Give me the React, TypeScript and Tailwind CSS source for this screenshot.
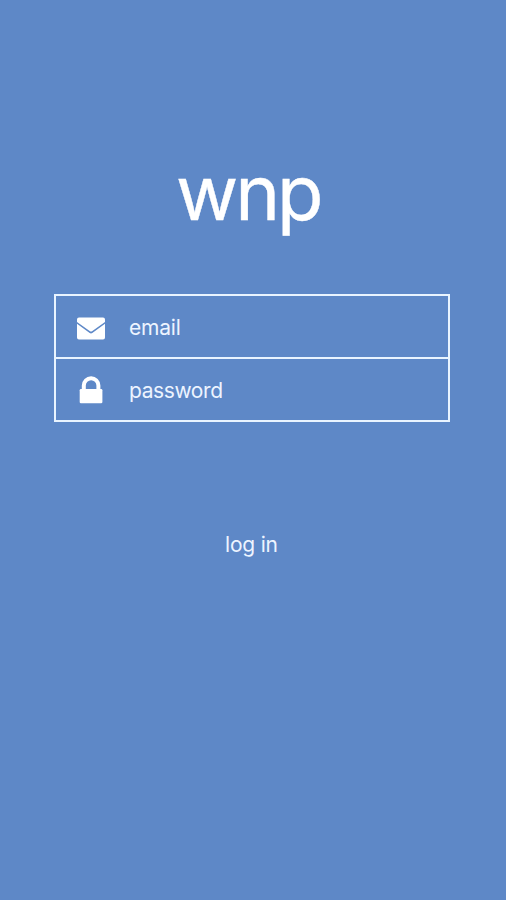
import React from "react";

function Envelope() {
  return (
    <svg className="mt-0.5 size-7 shrink-0" viewBox="0 0 28 28" fill="currentColor" aria-hidden="true">
      <path d="M2 3.5h24A2 2 0 0 1 28 5.5V8L15 17.2a1.8 1.8 0 0 1-2 0L0 8V5.5A2 2 0 0 1 2 3.5Z" />
      <path d="M0 9.8 12.7 18.9a2.2 2.2 0 0 0 2.6 0L28 9.8V23.5a2 2 0 0 1-2 2H2a2 2 0 0 1-2-2Z" />
    </svg>
  );
}

function Lock() {
  return (
    <svg className="size-7 shrink-0" viewBox="0 0 28 28" fill="none" aria-hidden="true">
      <path d="M6.8 15V9.5a7.3 7.3 0 0 1 14.6 0V15" stroke="currentColor" strokeWidth="4" />
      <rect x="2.7" y="13" width="22.7" height="14.3" rx="1.3" fill="currentColor" />
    </svg>
  );
}

export default function App() {
  return (
    <main className="flex h-[900px] w-full flex-col bg-[#5e88c7] font-['Inter',sans-serif] text-white">
      <h1 className="ml-[176px] mt-[144px] h-[96px] w-max text-[76px] font-normal leading-[96px] tracking-[-3px] [-webkit-text-stroke:0.4px_white]">wnp</h1>
      <form className="ml-[54px] mt-[54px] flex h-[128px] w-[396px] flex-col border-2 border-[#e9f4ff]">
        <label className="flex h-[63px] items-center border-b-2 border-[#e9f4ff] pl-[21px]">
          <Envelope />
          <span className="ml-[24px] pt-[3px] text-[21px] leading-7 tracking-[-0.2px] text-[#edf4ff]">email</span>
        </label>
        <label className="flex h-[61px] items-center pl-[21px]">
          <Lock />
          <span className="ml-[24px] pt-[3px] text-[21px] leading-7 tracking-[-0.4px] text-[#edf4ff]">password</span>
        </label>
      </form>
      <button className="ml-[225px] mt-[109px] w-max text-[21px] leading-7 tracking-[-0.2px] text-[#edf4ff]">log in</button>
    </main>
  );
}
